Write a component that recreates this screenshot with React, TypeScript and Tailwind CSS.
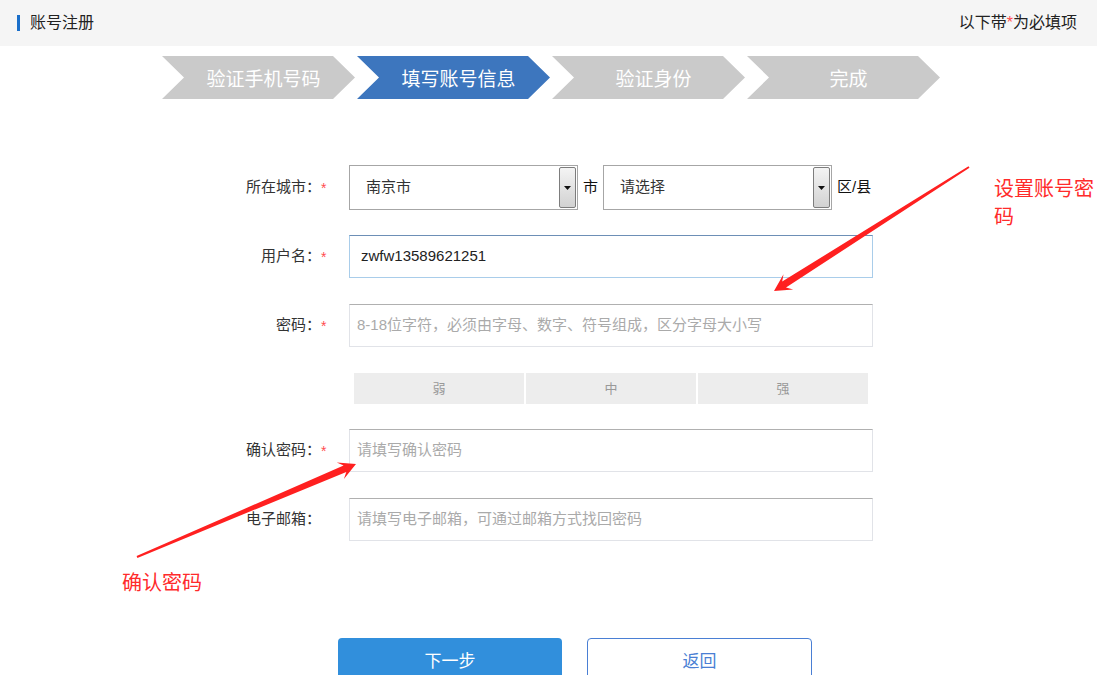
import React from "react";

const FONT = { fontFamily: '"Liberation Sans", "Noto Sans CJK SC", sans-serif' };

const steps = [
  { label: "验证手机号码", active: false },
  { label: "填写账号信息", active: true },
  { label: "验证身份", active: false },
  { label: "完成", active: false },
];

type Pt = [number, number];

function arrowPoints(tail: Pt, tip: Pt, headLen: number, headHalf: number, tailHalf: number, neckHalf: number, notch: number) {
  const dx = tip[0] - tail[0];
  const dy = tip[1] - tail[1];
  const len = Math.hypot(dx, dy);
  const ux = dx / len;
  const uy = dy / len;
  const nx = -uy;
  const ny = ux;
  const wing: Pt = [tip[0] - ux * headLen, tip[1] - uy * headLen];
  const neck: Pt = [tip[0] - ux * (headLen - notch), tip[1] - uy * (headLen - notch)];
  const pts: Pt[] = [
    [tail[0] + nx * tailHalf, tail[1] + ny * tailHalf],
    [neck[0] + nx * neckHalf, neck[1] + ny * neckHalf],
    [wing[0] + nx * headHalf, wing[1] + ny * headHalf],
    tip,
    [wing[0] - nx * headHalf, wing[1] - ny * headHalf],
    [neck[0] - nx * neckHalf, neck[1] - ny * neckHalf],
    [tail[0] - nx * tailHalf, tail[1] - ny * tailHalf],
  ];
  return pts.map((p) => `${p[0].toFixed(1)},${p[1].toFixed(1)}`).join(" ");
}

function Required() {
  return <span className="text-[14px] text-[#ff4d4f]">*</span>;
}

function Row({ label, required, children }: { label: string; required?: boolean; children: React.ReactNode }) {
  return (
    <div className="flex items-center">
      <div className="w-[321px] text-right text-[15px] text-[#333]">{label}</div>
      <div className="w-[28px]">{required && <Required />}</div>
      {children}
    </div>
  );
}

function FakeSelect({ value }: { value: string }) {
  return (
    <div className="flex h-[45px] w-[229px] items-center justify-between border border-[#a6a6a6] bg-white pr-[1px]">
      <span className="pl-[16px] text-[15px] text-[#333]">{value}</span>
      <div className="flex h-[41px] w-[17px] items-center justify-center rounded-[2px] border border-[#7d7d7d] bg-gradient-to-b from-[#f4f4f4] to-[#d2d2d2]">
        <svg width="7" height="4" viewBox="0 0 7 4">
          <path d="M0 0h7L3.5 4z" fill="#111" />
        </svg>
      </div>
    </div>
  );
}

function TextBox({ placeholder, value, highlight }: { placeholder?: string; value?: string; highlight?: boolean }) {
  return (
    <div
      className={
        highlight
          ? "flex h-[43px] w-[524px] items-center border border-[#a9cdea] border-t-[#6d8fb6] px-[11px]"
          : "flex h-[43px] w-[524px] items-center border border-[#e1e3e8] border-t-[#b0b0b0] px-[7px]"
      }
    >
      {value ? (
        <span className="text-[15px] text-[#222]">{value}</span>
      ) : (
        <span className="text-[15px] text-[#aaa]">{placeholder}</span>
      )}
    </div>
  );
}

export default function App() {
  const arrowA = arrowPoints([969, 167], [774, 291], 17, 9, 1, 3.5, 5);
  const arrowB = arrowPoints([137, 557], [356, 464], 17, 9, 1, 3.5, 5);

  return (
    <div className="relative h-[675px] w-[1116px] overflow-hidden bg-white" style={FONT}>
      <div className="w-[1097px]">
        {/* header */}
        <div className="flex h-[46px] items-center justify-between bg-[#f5f5f5] pl-[17px] pr-[20px]">
          <div className="flex items-center gap-[10px]">
            <span className="h-[16px] w-[3px] bg-[#1a6fca]" />
            <span className="text-[16px] text-[#222]">账号注册</span>
          </div>
          <div className="text-[16px] text-[#222]">
            以下带<span className="text-[#ff4d4f]">*</span>为必填项
          </div>
        </div>

        {/* steps */}
        <div className="mt-[10px] flex gap-[2px] pl-[162px]">
          {steps.map((s) => (
            <div
              key={s.label}
              className={
                (s.active ? "bg-[#3d76be] " : "bg-[#cacaca] ") +
                "flex h-[43px] w-[193px] items-center justify-center pl-[10px] pt-[5px] text-[19px] text-white [clip-path:polygon(0_0,171px_0,100%_50%,171px_100%,0_100%,22px_50%)]"
              }
            >
              {s.label}
            </div>
          ))}
        </div>

        {/* form */}
        <div className="mt-[66px] flex flex-col">
          <Row label="所在城市：" required>
            <FakeSelect value="南京市" />
            <span className="px-[5px] text-[15px] text-[#111]">市</span>
            <FakeSelect value="请选择" />
            <span className="pl-[5px] text-[15px] text-[#111]">区/县</span>
          </Row>
          <div className="mt-[25px]">
            <Row label="用户名：" required>
              <TextBox value="zwfw13589621251" highlight />
            </Row>
          </div>
          <div className="mt-[26px]">
            <Row label="密码：" required>
              <TextBox placeholder="8-18位字符，必须由字母、数字、符号组成，区分字母大小写" />
            </Row>
          </div>
          <div className="mt-[26px] flex gap-[2px] pl-[354px]">
            {["弱", "中", "强"].map((t) => (
              <div key={t} className="flex h-[31px] w-[170px] items-center justify-center bg-[#ededed] text-[13px] text-[#999]">
                {t}
              </div>
            ))}
          </div>
          <div className="mt-[25px]">
            <Row label="确认密码：" required>
              <TextBox placeholder="请填写确认密码" />
            </Row>
          </div>
          <div className="mt-[26px]">
            <Row label="电子邮箱：">
              <TextBox placeholder="请填写电子邮箱，可通过邮箱方式找回密码" />
            </Row>
          </div>

          {/* buttons */}
          <div className="mt-[97px] flex gap-[25px] pl-[338px]">
            <button className="flex h-[44px] w-[224px] items-center justify-center rounded-[4px] bg-[#318fdc] pt-[3px] text-[17px] text-white">
              下一步
            </button>
            <button className="flex h-[44px] w-[225px] items-center justify-center rounded-[4px] border border-[#4a7fd4] bg-white pt-[3px] text-[17px] text-[#4a7fd4]">
              返回
            </button>
          </div>
        </div>
      </div>

      {/* annotations */}
      <div className="absolute left-[994px] top-[175px] w-[104px] text-[20px] leading-[28px] text-[#ff2b2b]">设置账号密码</div>
      <div className="absolute left-[122px] top-[569px] text-[20px] leading-[28px] text-[#ff2b2b]">确认密码</div>
      <svg className="pointer-events-none absolute left-0 top-0" width="1116" height="675">
        <polygon points={arrowA} fill="#ff2020" />
        <polygon points={arrowB} fill="#ff2020" />
      </svg>
    </div>
  );
}
